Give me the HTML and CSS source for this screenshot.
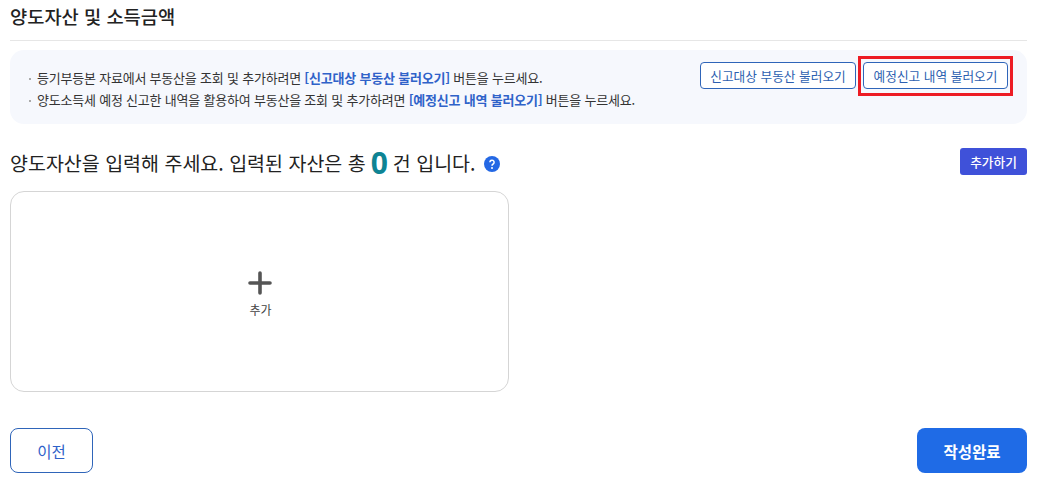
FILE: index.html
```html
<!DOCTYPE html>
<html lang="ko">
<head>
<meta charset="utf-8">
<title>양도자산 및 소득금액</title>
<link rel="stylesheet" href="styles.css">
</head>
<body>
<main class="page">
  <h1 class="title">양도자산 및 소득금액</h1>
  <section class="notice">
    <ul class="notice-list">
      <li>등기부등본 자료에서 부동산을 조회 및 추가하려면 <b>[신고대상 부동산 불러오기]</b> 버튼을 누르세요.</li>
      <li>양도소득세 예정 신고한 내역을 활용하여 부동산을 조회 및 추가하려면 <b>[예정신고 내역 불러오기]</b> 버튼을 누르세요.</li>
    </ul>
    <div class="notice-actions">
      <button class="btn-outline">신고대상 부동산 불러오기</button>
      <button class="btn-outline highlighted">예정신고 내역 불러오기</button>
    </div>
  </section>
  <div class="heading-row">
    <h2 class="heading">양도자산을 입력해 주세요. 입력된 자산은 총 <strong class="count">0</strong> 건 입니다.
      <svg class="help" viewBox="0 0 16 16" width="16" height="16" aria-hidden="true"><circle cx="8" cy="8" r="8" fill="#2468e4"/><path d="M5.9 6.3a2.1 2.1 0 1 1 3.3 1.7c-.8.5-1.2.9-1.2 1.7" fill="none" stroke="#fff" stroke-width="1.5"/><circle cx="8" cy="12" r="1" fill="#fff"/></svg>
    </h2>
    <button class="btn-add">추가하기</button>
  </div>
  <button class="add-card">
    <svg class="plus" viewBox="0 0 24 24" width="24" height="24" aria-hidden="true"><path d="M12 2v20M2 12h20" stroke="#555" stroke-width="3.6" stroke-linecap="round"/></svg>
    <span class="add-label">추가</span>
  </button>
  <div class="footer">
    <button class="btn-prev">이전</button>
    <button class="btn-done">작성완료</button>
  </div>
</main>
</body>
</html>
```
FILE: styles.css
```css
*, *::before, *::after { box-sizing: border-box; }
html, body { margin: 0; padding: 0; background: #fff; }
body {
  width: 1040px;
  height: 482px;
  overflow: hidden;
  font-family: "Noto Sans CJK KR", "Noto Sans", sans-serif;
  color: #222;
}
button { font-family: inherit; cursor: pointer; padding: 0; }
.page { width: 1017px; margin-left: 10px; }
.title {
  margin: 0;
  height: 41px;
  padding-top: 3px;
  border-bottom: 1px solid #e6e6e6;
  font-size: 18.7px;
  line-height: 26px;
  font-weight: 500;
  color: #222;
}
.notice {
  margin-top: 9px;
  height: 74px;
  border-radius: 14px;
  background: #f6f8fd;
  display: flex;
  justify-content: space-between;
  padding: 12px 19px 0 17px;
}
.notice-list {
  list-style: none;
  margin: 5px 0 0;
  padding: 0;
  font-size: 13px;
  line-height: 22px;
  color: #333;
}
.notice-list li { position: relative; padding-left: 10px; letter-spacing: -0.21px; }
.notice-list li::before {
  content: "";
  position: absolute;
  left: 2px;
  top: 11px;
  width: 2px;
  height: 2px;
  background: #aaa;
}
.notice-list b { font-weight: 700; color: #2f62c9; }
.notice-actions { display: flex; gap: 7px; align-items: flex-start; }
.btn-outline {
  height: 27px;
  border: 1px solid #2f65b9;
  border-radius: 4px;
  background: #fff;
  color: #2d5fb0;
  font-size: 12.7px;
  line-height: 25px;
}
.btn-outline:first-child { width: 156px; }
.btn-outline.highlighted { width: 145px; position: relative; }
.btn-outline.highlighted::after {
  content: "";
  position: absolute;
  left: -6px;
  top: -7px;
  width: 155px;
  height: 40px;
  border: 3px solid #ed1c24;
}
.heading-row {
  margin-top: 23px;
  height: 44px;
  display: flex;
  justify-content: space-between;
  align-items: flex-start;
}
.heading {
  margin: 0;
  font-size: 19.5px;
  line-height: 32px;
  font-weight: 400;
  color: #222;
  white-space: nowrap;
  display: flex;
  align-items: center;
  gap: 5px;
}
.count { font-family: "Noto Sans", sans-serif; font-size: 30px; font-weight: 700; color: #0e8494; line-height: 32px; }
.help { margin-left: 3px; margin-top: 2px; }
.btn-add {
  width: 67px;
  height: 27px;
  margin-top: 1px;
  border: 0;
  border-radius: 3px;
  background: #3f51d9;
  color: #fff;
  font-size: 12.7px;
  font-weight: 500;
}
.add-card {
  width: 499px;
  height: 201px;
  border: 1px solid #d5d5d5;
  border-radius: 14px;
  background: #fff;
  display: flex;
  flex-direction: column;
  align-items: center;
  justify-content: center;
  gap: 7px;
  padding-top: 6px;
  color: #444;
  font-size: 12px;
  line-height: 16px;
}
.add-label { padding-left: 2px; }
.footer {
  margin-top: 36px;
  display: flex;
  justify-content: space-between;
}
.btn-prev {
  width: 83px;
  height: 45px;
  border: 1px solid #2f65b9;
  border-radius: 8px;
  background: #fff;
  color: #2f62c9;
  font-size: 15.5px;
}
.btn-done {
  width: 110px;
  height: 45px;
  border: 0;
  border-radius: 8px;
  background: #1f6be6;
  color: #fff;
  font-size: 15.5px;
  font-weight: 700;
}
```
